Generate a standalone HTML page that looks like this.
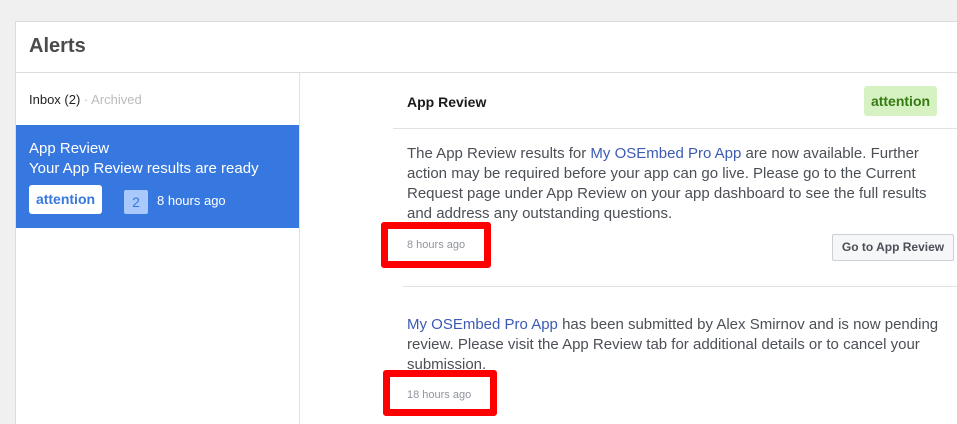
<!DOCTYPE html>
<html style="overflow:hidden;height:424px"><head><style>
body{margin:0;width:957px;height:424px;background:#f0f0f0;font-family:"Liberation Sans",sans-serif;overflow:hidden;position:relative}
.card{position:absolute;left:15px;top:21px;width:941px;height:403px;background:#fff;border-left:1px solid #dcdcdc;border-top:1px solid #dcdcdc}
.a{position:absolute}
</style></head><body>
<div class="card"></div>
<div class="a" style="left:29px;top:35px;font-size:20px;font-weight:bold;color:#4a4a4a">Alerts</div>
<div class="a" style="left:16px;top:72px;width:941px;height:1px;background:#dcdcdc"></div>
<div class="a" style="left:299px;top:73px;width:1px;height:351px;background:#e2e2e2"></div>
<div class="a" style="left:29px;top:92px;font-size:13px;color:#222">Inbox (2) <span style="color:#bbb">· Archived</span></div>
<div class="a" style="left:16px;top:125px;width:283px;height:103px;background:#3778e0"></div>
<div class="a" style="left:29px;top:139px;font-size:15px;color:#fff;line-height:20px">App Review<br>Your App Review results are ready</div>
<div class="a" style="left:29px;top:185px;width:73px;height:29px;background:#fff;border-radius:3px;color:#3778e0;font-weight:bold;font-size:14px;line-height:29px;text-align:center">attention</div>
<div class="a" style="left:124px;top:190px;width:24px;height:24px;background:#a9c8fb;border-radius:2px;color:#3778e0;font-size:14px;line-height:24px;text-align:center">2</div>
<div class="a" style="left:157px;top:193px;font-size:13px;color:#fff">8 hours ago</div>
<div class="a" style="left:407px;top:94px;font-size:14px;font-weight:bold;color:#1a1a1a">App Review</div>
<div class="a" style="left:864px;top:86px;width:73px;height:30px;background:#d6f2c2;border-radius:3px;color:#357a10;font-weight:bold;font-size:14px;line-height:30px;text-align:center">attention</div>
<div class="a" style="left:393px;top:128px;width:564px;height:1px;background:#e2e2e2"></div>
<div class="a" style="left:407px;top:144px;width:545px;font-size:15px;line-height:20px;color:#4b4f56">The App Review results for <span style="color:#3b5bb5">My OSEmbed Pro App</span> are now available. Further action may be required before your app can go live. Please go to the Current Request page under App Review on your app dashboard to see the full results and address any outstanding questions.</div>
<div class="a" style="left:381px;top:222px;width:96px;height:32px;border:7px solid #f00;border-radius:3px"></div>
<div class="a" style="left:407px;top:239px;font-size:11px;color:#90949c">8 hours ago</div>
<div class="a" style="left:832px;top:234px;width:120px;height:25px;border:1px solid #ccd0d5;background:#f6f7f9;border-radius:2px;font-size:12px;font-weight:bold;color:#4b4f56;line-height:25px;text-align:center">Go to App Review</div>
<div class="a" style="left:403px;top:286px;width:554px;height:1px;background:#e2e2e2"></div>
<div class="a" style="left:407px;top:315px;width:550px;font-size:15px;line-height:20px;color:#4b4f56"><span style="color:#3b5bb5">My OSEmbed Pro App</span> has been submitted by Alex Smirnov and is now pending review. Please visit the App Review tab for additional details or to cancel your submission.</div>
<div class="a" style="left:383px;top:370px;width:100px;height:32px;border:7px solid #f00;border-radius:3px"></div>
<div class="a" style="left:407px;top:389px;font-size:11px;color:#90949c">18 hours ago</div>
</body></html>
